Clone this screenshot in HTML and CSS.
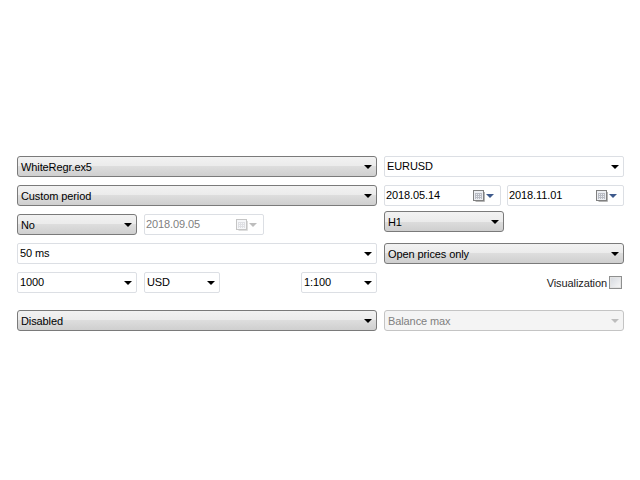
FILE: index.html
```html
<!DOCTYPE html>
<html lang="en">
<head>
    <meta charset="UTF-8">
    <title>Strategy Tester</title>
    <link rel="stylesheet" href="styles.css">
</head>
<body>
    <div class="panel">
        <div class="col col-left">
            <div class="row row-1">
                <div class="combo glass full"><span class="txt">WhiteRegr.ex5</span><i class="arrow"></i></div>
            </div>
            <div class="row row-2">
                <div class="combo glass full"><span class="txt">Custom period</span><i class="arrow"></i></div>
            </div>
            <div class="row row-3">
                <div class="combo glass w120"><span class="txt">No</span><i class="arrow"></i></div>
                <div class="combo date off w120">
                    <span class="txt">2018.09.05</span>
                    <svg class="cal cal-off" width="12" height="12" viewBox="0 0 12 12"><rect class="cal-body" x="0.5" y="0.5" width="10" height="10"/><path class="cal-grid" d="M2 3.500h7M2 5.500h7M2 7.500h7M2.500 3v6M4.500 3v6M6.500 3v6M8.500 3v6"/><path class="cal-shade" d="M11.500 2v9.500h-9"/></svg>
                    <i class="arrow"></i>
                </div>
            </div>
            <div class="row row-4">
                <div class="combo plain full"><span class="txt">50 ms</span><i class="arrow"></i></div>
            </div>
            <div class="row row-5">
                <div class="combo plain w120"><span class="txt">1000</span><i class="arrow"></i></div>
                <div class="combo plain w76"><span class="txt">USD</span><i class="arrow"></i></div>
                <div class="combo plain w76 push"><span class="txt">1:100</span><i class="arrow"></i></div>
            </div>
            <div class="row row-6">
                <div class="combo glass full"><span class="txt">Disabled</span><i class="arrow"></i></div>
            </div>
        </div>
        <div class="col col-right">
            <div class="row row-1">
                <div class="combo plain full"><span class="txt">EURUSD</span><i class="arrow"></i></div>
            </div>
            <div class="row row-2 tight">
                <div class="combo date w117">
                    <span class="txt">2018.05.14</span>
                    <svg class="cal" width="12" height="12" viewBox="0 0 12 12"><rect class="cal-body" x="0.5" y="0.5" width="10" height="10"/><path class="cal-grid" d="M2 3.500h7M2 5.500h7M2 7.500h7M2.500 3v6M4.500 3v6M6.500 3v6M8.500 3v6"/><path class="cal-shade" d="M11.500 2v9.500h-9"/></svg>
                    <i class="arrow blue"></i>
                </div>
                <div class="combo date w117">
                    <span class="txt">2018.11.01</span>
                    <svg class="cal" width="12" height="12" viewBox="0 0 12 12"><rect class="cal-body" x="0.5" y="0.5" width="10" height="10"/><path class="cal-grid" d="M2 3.500h7M2 5.500h7M2 7.500h7M2.500 3v6M4.500 3v6M6.500 3v6M8.500 3v6"/><path class="cal-shade" d="M11.500 2v9.500h-9"/></svg>
                    <i class="arrow blue"></i>
                </div>
            </div>
            <div class="row row-h1">
                <div class="combo glass w120"><span class="txt">H1</span><i class="arrow"></i></div>
            </div>
            <div class="row row-open">
                <div class="combo glass full"><span class="txt">Open prices only</span><i class="arrow"></i></div>
            </div>
            <div class="row row-vis">
                <label class="vis">Visualization<span class="check"></span></label>
            </div>
            <div class="row row-bal">
                <div class="combo off-glass full"><span class="txt">Balance max</span><i class="arrow"></i></div>
            </div>
        </div>
    </div>
</body>
</html>
```

FILE: styles.css
```css
* { box-sizing: border-box; }
html, body { margin: 0; padding: 0; background: #fff; }
body { font-family: "Liberation Sans", Arial, sans-serif; font-size: 11px; letter-spacing: -0.1px; color: #000; }

.panel { display: flex; gap: 7px; padding: 156px 16px 0 17px; }
.col { display: flex; flex-direction: column; }
.col-left { width: 360px; }
.col-right { width: 240px; }

.row { display: flex; gap: 7px; height: 21px; flex: none; }
.row-2, .row-3, .row-4, .row-5 { margin-top: 8px; }
.row-6 { margin-top: 17px; }
.tight { gap: 6px; }
.row-h1 { margin-top: 5px; }
.row-open { margin-top: 11px; }
.row-vis { margin-top: 8px; justify-content: flex-end; }
.row-bal { margin-top: 17px; }

.combo {
    display: flex;
    align-items: center;
    height: 21px;
    padding: 0 4px 0 3px;
    border: 1px solid #dcdfe4;
    border-radius: 2px;
    background: #fff;
}
.plain { padding-left: 2px; }
.txt { flex: 1; white-space: nowrap; }
.plain .txt, .date .txt { margin-top: -2px; }
.full { width: 100%; }
.w120 { width: 120px; }
.w117 { width: 117px; }
.w76 { width: 76px; }
.push { margin-left: auto; }

.glass {
    border-color: #7a7a7a;
    border-radius: 3px;
    background: linear-gradient(#f2f2f2 0%, #ebebeb 50%, #dddddd 50%, #cfcfcf 100%);
}
.off-glass {
    border-color: #c4c4c4;
    border-radius: 3px;
    background: #f4f4f4;
    color: #808080;
}
.off { color: #808080; }
.date { padding-right: 6px; padding-left: 1px; }
.date .arrow { margin-left: 1px; }

.cal { flex: none; }
.cal-body { fill: #eceef2; stroke: #808080; }
.cal-grid { fill: none; stroke: #b9bcc4; }
.cal-shade { fill: none; stroke: #b4b4b4; }
.cal-off { opacity: 0.45; }

.arrow {
    flex: none;
    width: 0;
    height: 0;
    border-left: 4px solid transparent;
    border-right: 4px solid transparent;
    border-top: 4px solid #000;
}
.blue { border-top-color: #3e5a8c; }
.off .arrow, .off-glass .arrow { border-top-color: #bdbdbd; }

.vis { display: flex; align-items: center; gap: 2px; padding-right: 2px; height: 21px; color: #222; }
.check {
    width: 13px;
    height: 13px;
    border: 1px solid #8e8f8f;
    background: linear-gradient(135deg, #d4d8de, #f8f8f8);
    box-shadow: inset 0 0 0 1px #e4e4e4;
}
```
